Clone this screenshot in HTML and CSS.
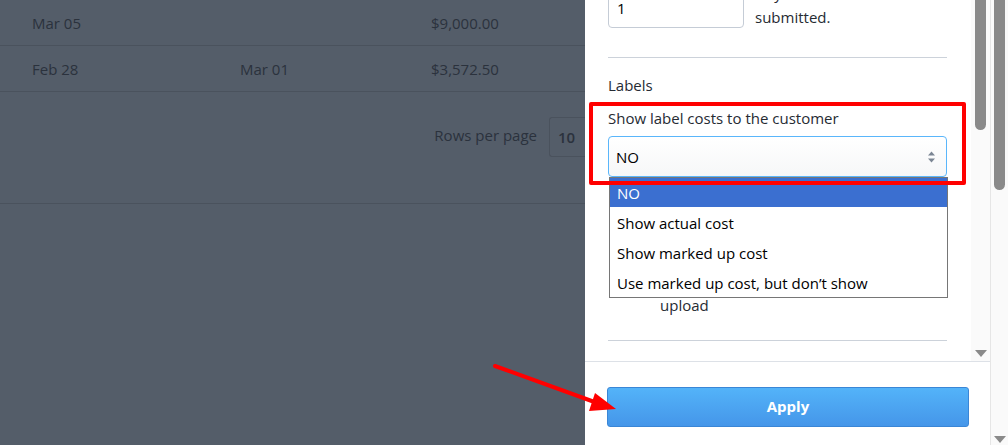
FILE: index.html
```html
<!DOCTYPE html>
<html>
<head>
<meta charset="utf-8">
<link rel="stylesheet" href="styles.css">
</head>
<body>
<div class="page">
  <div class="backdrop">
    <div class="row">
      <span class="c1">Mar 05</span><span class="c2"></span><span class="c3">$9,000.00</span>
    </div>
    <div class="row">
      <span class="c1">Feb 28</span><span class="c2">Mar 01</span><span class="c3">$3,572.50</span>
    </div>
    <div class="pager">
      <span class="pager-label">Rows per page</span>
      <span class="pager-select">10</span>
    </div>
  </div>

  <div class="panel">
    <div class="panel-main">
      <div class="panel-body">
        <div class="content">
          <div class="days-row">
            <div class="num-input">1</div>
            <div class="days-text">Days after order is<br>submitted.</div>
          </div>
          <hr class="rule">
          <div class="section-title">Labels</div>
          <div class="field">
            <div class="field-label">Show label costs to the customer</div>
            <div class="select">
              <span>NO</span>
              <svg class="updown" width="9" height="14" viewBox="0 0 9 14"><path d="M1 5.5 L4.5 1.5 L8 5.5 Z M1 8.5 L4.5 12.5 L8 8.5 Z" fill="#7b8694"/></svg>
            </div>
            <div class="dropdown">
              <div class="opt selected">NO</div>
              <div class="opt">Show actual cost</div>
              <div class="opt">Show marked up cost</div>
              <div class="opt">Use marked up cost, but don’t show</div>
            </div>
            <div class="highlight"></div>
          </div>
          <div class="toggle-row">
            <div class="toggle-space"></div>
            <div class="toggle-text">upload</div>
          </div>
          <hr class="rule rule2">
        </div>
      </div>
      <div class="inner-scroll">
        <div class="thumb inner-thumb"></div>
        <div class="arrow-down"></div>
      </div>
    </div>
    <div class="panel-footer">
      <button class="apply">Apply</button>
    </div>
  </div>

  <div class="outer-scroll">
    <div class="thumb outer-thumb"></div>
    <div class="arrow-down"></div>
  </div>

  <svg class="annot-arrow" width="1008" height="445" viewBox="0 0 1008 445">
    <line x1="495" y1="366" x2="600" y2="404" stroke="#ff0000" stroke-width="4" stroke-linecap="round"/>
    <polygon points="616,409 595,393 589,411" fill="#ff0000"/>
  </svg>
</div>
</body>
</html>
```

FILE: styles.css
```css
* { box-sizing: border-box; }
html, body { margin: 0; padding: 0; }
body {
  width: 1008px;
  height: 445px;
  overflow: hidden;
  font-family: "Open Sans", "Liberation Sans", Arial, sans-serif;
  font-size: 15px;
  color: #262b33;
}
.page {
  position: relative;
  display: flex;
  width: 1008px;
  height: 445px;
}

/* dimmed background */
.backdrop {
  width: 585px;
  flex: none;
  background: #545d69;
  color: #2b323d;
}
.row {
  display: flex;
  align-items: center;
  height: 46px;
  border-bottom: 1px solid #4a525d;
  padding-left: 32px;
}
.c1 { width: 208px; }
.c2 { width: 191px; }
.c3 { width: 120px; }
.pager {
  height: 112px;
  border-bottom: 1px solid #4a525d;
  display: flex;
  justify-content: flex-end;
  align-items: flex-start;
  padding-top: 25px;
}
.pager-label { margin-top: 8px; margin-right: 12px; }
.pager-select {
  width: 36px;
  height: 40px;
  border: 1px solid #4a525d;
  border-right: none;
  border-radius: 3px 0 0 3px;
  padding-left: 8px;
  line-height: 38px;
  font-weight: 600;
}

/* side panel */
.panel {
  width: 405px;
  flex: none;
  display: flex;
  flex-direction: column;
  background: #fff;
}
.panel-main {
  height: 362px;
  display: flex;
  border-bottom: 1px solid #dde1e7;
}
.panel-body {
  flex: 1;
  overflow: hidden;
  padding: 0 24px 0 23px;
}
.content { margin-top: -12px; }
.days-row { display: flex; align-items: flex-start; }
.num-input {
  width: 136px;
  height: 40px;
  border: 1px solid #c5ccd6;
  border-radius: 4px;
  padding-left: 8px;
  line-height: 38px;
  color: #000;
  flex: none;
}
.days-text {
  margin-left: 11px;
  line-height: 24px;
  margin-top: -7px;
  margin-bottom: -7px;
}
.rule {
  border: none;
  border-top: 1px solid #ccd2da;
  margin: 29px 0 0 0;
}
.section-title {
  margin-top: 15px;
  line-height: 24px;
}
.field {
  position: relative;
  margin-top: 11px;
}
.field-label { line-height: 20px; }
.select {
  margin-top: 8px;
  height: 41px;
  border: 1px solid #5ab6fb;
  border-radius: 4px;
  background: linear-gradient(#ffffff, #f6f7f8);
  display: flex;
  align-items: center;
  justify-content: space-between;
  padding: 0 10px 0 7px;
  color: #000;
}
.dropdown {
  position: absolute;
  left: 1px;
  top: 69px;
  width: 339px;
  background: #fff;
  border: 1px solid #767676;
  z-index: 3;
  color: #000;
}
.opt {
  height: 30px;
  line-height: 32px;
  padding-left: 7px;
}
.opt.selected {
  background: #3b6fd0;
  color: #fff;
  height: 29px;
  line-height: 31px;
}
.highlight {
  position: absolute;
  left: -19px;
  top: -6px;
  width: 377px;
  height: 83px;
  border: 4px solid #ff0000;
  border-radius: 2px;
  z-index: 4;
}
.toggle-row {
  display: flex;
  margin-top: 118px;
}
.toggle-space { width: 52px; flex: none; }
.toggle-text { line-height: 20px; }
.rule2 { margin-top: 25px; }

/* scrollbars */
.inner-scroll {
  width: 19px;
  flex: none;
  background: #fafafa;
  display: flex;
  flex-direction: column;
  align-items: center;
  justify-content: space-between;
  padding-bottom: 4px;
}
.thumb {
  width: 11px;
  background: #8a8a8a;
  border-radius: 0 0 6px 6px;
}
.inner-thumb { height: 130px; }
.arrow-down {
  width: 0;
  height: 0;
  border-left: 6px solid transparent;
  border-right: 6px solid transparent;
  border-top: 7px solid #8a8a8a;
}
.panel-footer {
  flex: 1;
  padding: 25px 21px 0 22px;
}
.apply {
  display: block;
  width: 100%;
  height: 40px;
  border: 1px solid #3a86d6;
  border-radius: 3px;
  background: linear-gradient(#53b3f9, #4596e9);
  color: #fff;
  font-family: inherit;
  font-size: 15px;
  font-weight: 700;
  padding: 0 0 3px 0;
}
.outer-scroll {
  width: 18px;
  flex: none;
  background: #fafafa;
  border-left: 1px solid #e6e6e6;
  display: flex;
  flex-direction: column;
  align-items: center;
  justify-content: space-between;
  padding-bottom: 2px;
}
.outer-thumb { height: 190px; }

.annot-arrow {
  position: absolute;
  left: 0;
  top: 0;
  pointer-events: none;
  z-index: 10;
}
```
